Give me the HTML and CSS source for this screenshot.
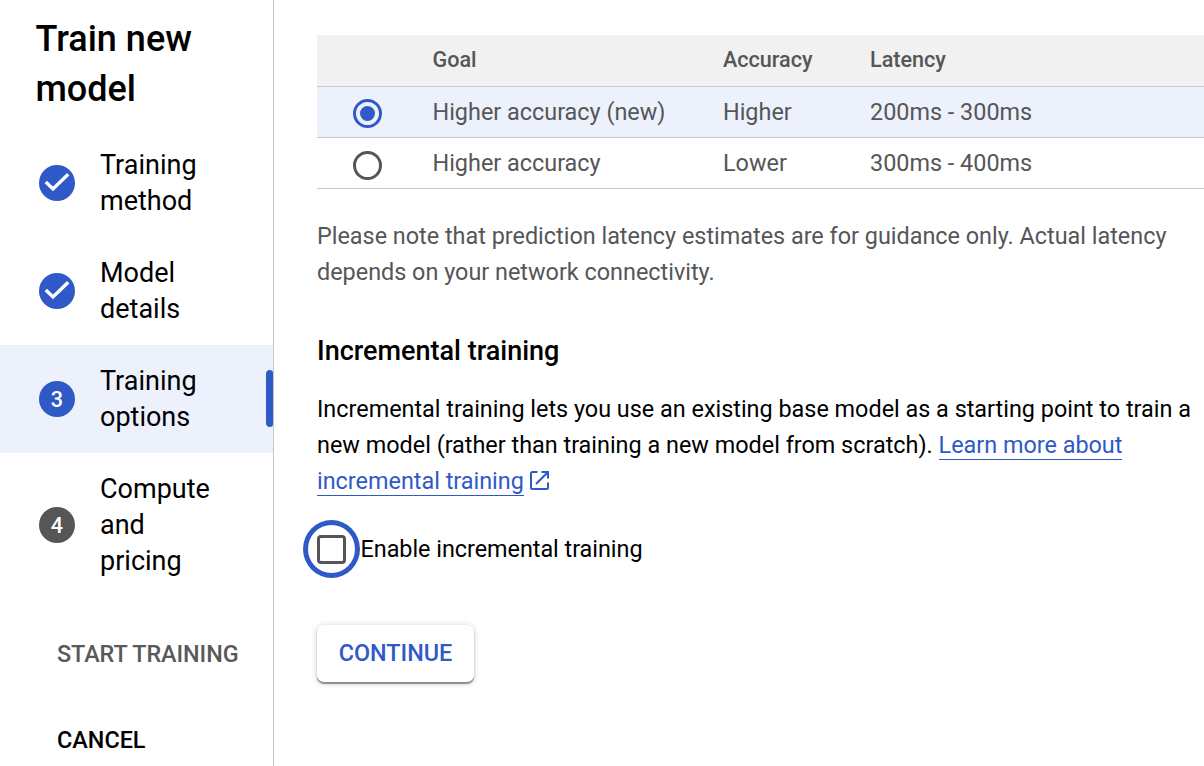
FILE: index.html
```html
<!DOCTYPE html>
<html lang="en">
<head>
<meta charset="utf-8">
<title>Train new model</title>
<link rel="stylesheet" href="styles.css">
</head>
<body>
<div class="app">
  <aside class="sidebar">
    <h1 class="title">Train new model</h1>
    <ol class="steps">
      <li class="step">
        <svg class="badge" viewBox="0 0 36 36"><circle cx="18" cy="18" r="18"/><path class="tick" d="M6.800 17l7.200 7L29.200 9.200"/></svg>
        <span class="step-label">Training method</span>
      </li>
      <li class="step">
        <svg class="badge" viewBox="0 0 36 36"><circle cx="18" cy="18" r="18"/><path class="tick" d="M6.800 17l7.200 7L29.200 9.200"/></svg>
        <span class="step-label">Model details</span>
      </li>
      <li class="step active">
        <span class="badge number">3</span>
        <span class="step-label">Training options</span>
        <span class="indicator"></span>
      </li>
      <li class="step">
        <span class="badge number pending">4</span>
        <span class="step-label">Compute and pricing</span>
      </li>
    </ol>
    <div class="actions">
      <span class="action disabled">START TRAINING</span>
      <span class="action">CANCEL</span>
    </div>
  </aside>
  <main class="content">
    <div class="table">
      <div class="row head"><span></span><span>Goal</span><span>Accuracy</span><span>Latency</span></div>
      <div class="row selected"><span class="radio on"></span><span class="goal">Higher accuracy (new)</span><span>Higher</span><span>200ms - 300ms</span></div>
      <div class="row"><span class="radio"></span><span class="goal">Higher accuracy</span><span>Lower</span><span>300ms - 400ms</span></div>
    </div>
    <p class="note">Please note that prediction latency estimates are for guidance only. Actual latency<br>depends on your network connectivity.</p>
    <h2 class="subtitle">Incremental training</h2>
    <p class="body-text">Incremental training lets you use an existing base model as a starting point to train a<br>new model (rather than training a new model from scratch). <a class="link">Learn more about<br>incremental training</a><svg class="external" viewBox="0 0 19 19"><path d="M7.500 1H2.500Q1 1 1 2.500v14Q1 18 2.500 18h14q1.500 0 1.500-1.500V11.500M11.500 1H18V7.500M17.500 1.500L6 13"/></svg></p>
    <label class="check-row"><span class="focus-ring"><span class="checkbox"></span></span><span class="check-label">Enable incremental training</span></label>
    <button class="continue">CONTINUE</button>
  </main>
</div>
</body>
</html>
```
FILE: styles.css
```css
* { box-sizing: border-box; }
body {
  margin: 0;
  background: #fff;
  color: #000;
  font-family: Roboto, "Liberation Sans", sans-serif;
  font-size: 23.4px;
  line-height: 36px;
}
h1, h2, p, ol { margin: 0; padding: 0; }
.app { display: flex; width: 1204px; height: 766px; overflow: hidden; }
.sidebar {
  flex: none;
  width: 274px;
  border-right: 1px solid #c8c8cc;
  padding-top: 14px;
}
.title {
  font-size: 36px;
  line-height: 50px;
  font-weight: 500;
  padding: 0 36px 15px 35.5px;
}
.steps { list-style: none; }
.step {
  position: relative;
  display: flex;
  align-items: center;
  gap: 25px;
  padding: 18px 60px 18px 39px;
  font-size: 27px;
}
.active { background: #edf1fc; }
.badge { flex: none; width: 36px; height: 36px; fill: #3059c8; }
.tick { fill: none; stroke: #fff; stroke-width: 3.4; }
.number {
  border-radius: 50%;
  background: #3059c8;
  color: #fff;
  font-size: 21.6px;
  line-height: 37px;
  font-weight: 500;
  text-align: center;
}
.pending { background: #555658; }
.indicator {
  position: absolute;
  right: 0;
  top: 25px;
  width: 7px;
  height: 57px;
  border-radius: 4px 3px 3px 4px;
  background: #3059c8;
}
.actions { display: flex; flex-direction: column; gap: 50px; padding: 39px 0 0 57px; }
.action { font-weight: 500; white-space: nowrap; }
.disabled { color: #58595b; letter-spacing: -0.08px; }
.content { flex: 1; min-width: 0; padding: 35px 0 0 43px; }
.row {
  display: grid;
  grid-template-columns: 115.500px 290.500px 147px 1fr;
  align-items: center;
  height: 51px;
  border-bottom: 1px solid #c8c8cc;
  color: #555658;
}
.head { height: 52px; padding-bottom: 2px; background: #f1f1f1; font-size: 21.6px; font-weight: 500; }
.selected { background: #edf1fc; }
.radio {
  display: grid;
  place-items: center;
  width: 29px;
  height: 29px;
  margin: 4px 0 0 36px;
  border: 3px solid #555658;
  border-radius: 50%;
}
.on { margin-top: 3px; border-color: #3059c8; }
.on::after { content: ""; width: 15px; height: 15px; border-radius: 50%; background: #3059c8; }
.note { margin-top: 29px; color: #555658; }
.subtitle { margin-top: 43px; font-size: 27px; font-weight: 500; }
.body-text { margin-top: 22px; white-space: nowrap; }
.link { color: #3059c8; border-bottom: 1px solid #3059c8; }
.external {
  width: 19px;
  height: 19px;
  margin-left: 6px;
  vertical-align: -1px;
  fill: none;
  stroke: #3059c8;
  stroke-width: 2;
}
.check-row { display: flex; align-items: center; width: 400px; height: 58px; margin: 21px 0 0 -14px; }
.check-label { letter-spacing: -0.03px; }
.focus-ring {
  display: grid;
  place-items: center;
  width: 57px;
  height: 58px;
  margin-right: 0.5px;
  border: 5px solid #3059c8;
  border-radius: 50%;
}
.checkbox { width: 29px; height: 29px; border: 3px solid #555658; border-radius: 4px; }
.continue {
  display: block;
  width: 157px;
  height: 57px;
  margin-top: 47px;
  padding: 0 0 1px;
  border: 0;
  border-radius: 7px;
  background: #fff;
  color: #3059c8;
  font: 500 23.4px/36px Roboto, "Liberation Sans", sans-serif;
  box-shadow: 0 2px 1px rgba(50, 50, 60, .5), 0 1px 6px rgba(0, 0, 0, .22);
}
```
